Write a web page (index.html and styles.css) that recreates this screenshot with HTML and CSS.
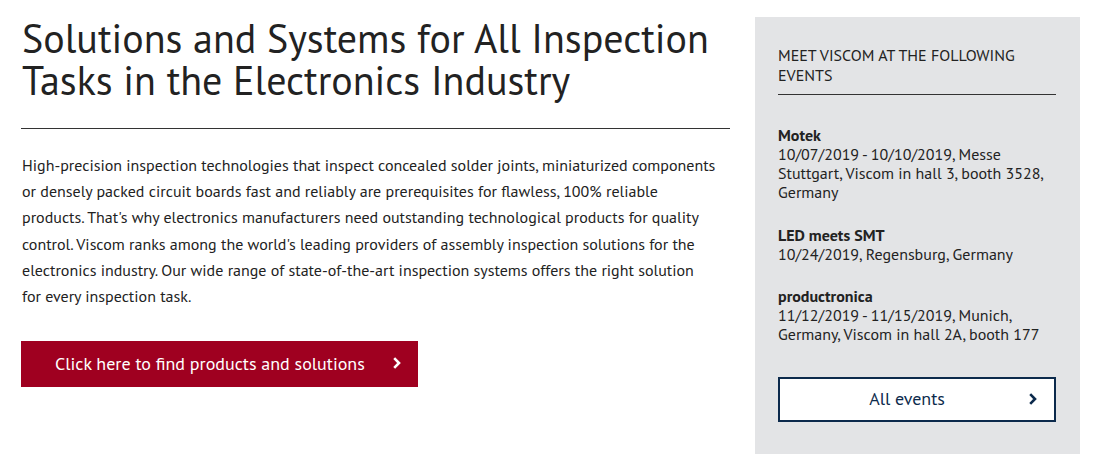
FILE: index.html
```html
<!DOCTYPE html>
<html lang="en">
<head>
<meta charset="utf-8">
<title>Viscom</title>
<link rel="stylesheet" href="styles.css">
</head>
<body>
<div class="page">
  <main class="main">
    <h1 class="title">Solutions and Systems for All Inspection Tasks in the Electronics Industry</h1>
    <p class="intro">High-precision inspection technologies that inspect concealed solder joints, miniaturized components or densely packed circuit boards fast and reliably are prerequisites for flawless, 100% reliable products. That's why electronics manufacturers need outstanding technological products for quality control. Viscom ranks among the world's leading providers of assembly inspection solutions for the electronics industry. Our wide range of state-of-the-art inspection systems offers the right solution for every inspection task.</p>
    <a class="btn-red" href="#"><span>Click here to find products and solutions</span>
      <svg class="chev" width="10" height="14" viewBox="0 0 10 14"><path d="M2.2 2.2 L7 7 L2.2 11.8" fill="none" stroke="currentColor" stroke-width="2.6"/></svg>
    </a>
  </main>
  <aside class="side">
    <h2 class="side-title">Meet Viscom at the following events</h2>
    <div class="event">
      <div class="event-name">Motek</div>
      <div class="event-info">10/07/2019 - 10/10/2019, Messe Stuttgart, Viscom in hall 3, booth 3528, Germany</div>
    </div>
    <div class="event">
      <div class="event-name">LED meets SMT</div>
      <div class="event-info">10/24/2019, Regensburg, Germany</div>
    </div>
    <div class="event">
      <div class="event-name">productronica</div>
      <div class="event-info">11/12/2019 - 11/15/2019, Munich, Germany, Viscom in hall 2A, booth 177</div>
    </div>
    <a class="btn-outline" href="#"><span>All events</span>
      <svg class="chev" width="10" height="14" viewBox="0 0 10 14"><path d="M2.2 2.2 L7 7 L2.2 11.8" fill="none" stroke="currentColor" stroke-width="2.6"/></svg>
    </a>
  </aside>
</div>
</body>
</html>
```
FILE: styles.css
```css
html, body {
  margin: 0;
  padding: 0;
  background: #fff;
}
body {
  font-family: "PT Sans", Lato, "Noto Sans", sans-serif;
  color: #222;
}
.page {
  display: flex;
  align-items: flex-start;
  padding: 17px 20px 0 21px;
  gap: 25px;
}
.main {
  width: 709px;
  flex: none;
}
.title {
  margin: 0;
  padding: 0 0 27px 1px;
  font-size: 40px;
  font-weight: 300;
  line-height: 42px;
  color: #222;
  border-bottom: 1px solid #333;
}
.intro {
  margin: 23px 0 0 1px;
  width: 695px;
  font-size: 16px;
  line-height: 26.2px;
  color: #222;
}
.btn-red {
  display: flex;
  align-items: center;
  justify-content: space-between;
  margin-top: 32px;
  height: 46px;
  padding: 0 16px 2px 34px;
  background: #9f0020;
  color: #fff;
  text-decoration: none;
  font-size: 18px;
  width: 397px;
  box-sizing: border-box;
  white-space: nowrap;
}
.side {
  width: 325px;
  flex: none;
  background: #e3e4e6;
  box-sizing: border-box;
  padding: 28px 24px 32px 23px;
}
.side-title {
  margin: 0;
  font-size: 16px;
  font-weight: 400;
  text-transform: uppercase;
  line-height: 20px;
  color: #222;
  padding-bottom: 9px;
  border-bottom: 1px solid #333;
}
.event {
  font-size: 16px;
  line-height: 19px;
  color: #222;
  margin-top: 23.5px;
}
.side-title + .event { margin-top: 31px; }
.event-name { font-weight: 700; }
.btn-outline {
  margin-top: 33px;
  display: flex;
  align-items: center;
  height: 45px;
  box-sizing: border-box;
  border: 2px solid #0c2a4c;
  background: #fff;
  color: #0c2a4c;
  text-decoration: none;
  font-size: 18px;
  padding: 0 16px 2px 6px;
}
.btn-outline span { flex: 1; text-align: center; }
.chev { flex: none; }
```
